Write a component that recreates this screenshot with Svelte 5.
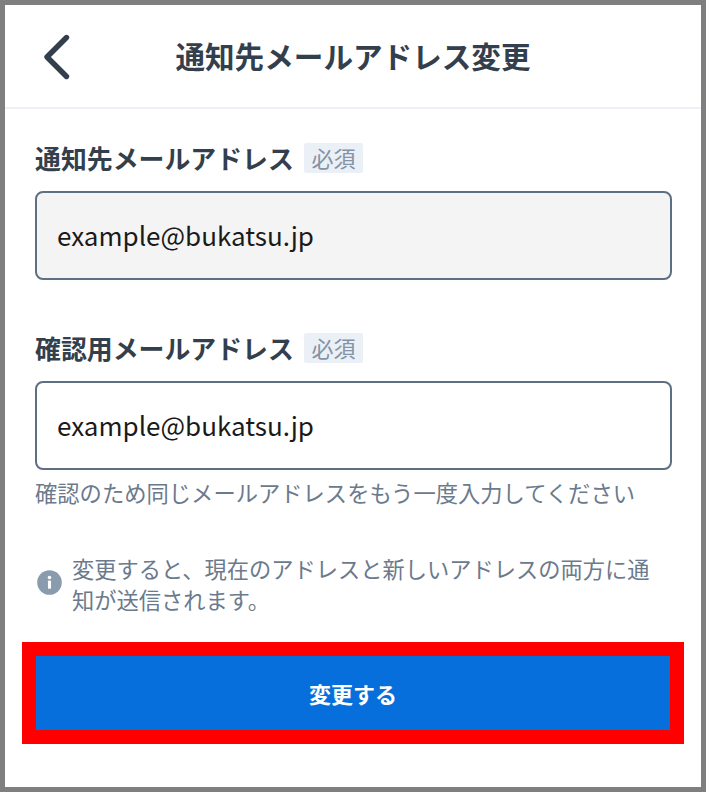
<script lang="ts">
  let email = $state('example@bukatsu.jp');
  let confirmEmail = $state('example@bukatsu.jp');
</script>

<div class="frame">
  <header class="header">
    <button class="back" aria-label="戻る">
      <svg width="30" height="48" viewBox="0 0 30 48" fill="none">
        <path d="M24.5 4.5 L5 24 L24.5 43.5" stroke="#333f4d" stroke-width="5.4" stroke-linecap="round" stroke-linejoin="round" />
      </svg>
    </button>
    <h1 class="title">通知先メールアドレス変更</h1>
  </header>

  <main class="body">
    <div class="field first">
      <div class="label-row">
        <label class="label" for="email">通知先メールアドレス</label>
        <span class="required">必須</span>
      </div>
      <input id="email" class="input readonly" type="text" readonly bind:value={email} />
    </div>

    <div class="field second">
      <div class="label-row">
        <label class="label" for="confirm">確認用メールアドレス</label>
        <span class="required">必須</span>
      </div>
      <input id="confirm" class="input" type="text" bind:value={confirmEmail} />
      <p class="hint">確認のため同じメールアドレスをもう一度入力してください</p>
    </div>

    <div class="notice">
      <svg class="info" width="25" height="25" viewBox="0 0 26 26">
        <circle cx="13" cy="13" r="12.8" fill="#8a9bad" />
        <circle cx="13" cy="7.8" r="1.9" fill="#fff" />
        <rect x="11.4" y="11" width="3.2" height="8.6" rx="0.8" fill="#fff" />
      </svg>
      <p>変更すると、現在のアドレスと新しいアドレスの両方に通知が送信されます。</p>
    </div>

    <div class="highlight">
      <button class="submit">変更する</button>
    </div>
  </main>
</div>

<style>
  :global(body) {
    margin: 0;
    background: #fff;
  }
  .frame {
    width: 706px;
    height: 792px;
    box-sizing: border-box;
    border: 5px solid #7f7f7f;
    background: #fff;
    font-family: 'Noto Sans CJK JP', 'Noto Sans', sans-serif;
    color: #333f4d;
    display: flex;
    flex-direction: column;
  }
  .header {
    height: 104px;
    flex: none;
    box-sizing: border-box;
    border-bottom: 2px solid #edf1f5;
    display: grid;
    grid-template-columns: 1fr auto 1fr;
    align-items: center;
  }
  .back {
    justify-self: start;
    margin: 2px 0 0 37px;
    padding: 0;
    border: 0;
    background: none;
    display: flex;
  }
  .title {
    grid-column: 2;
    margin: 0;
    font-size: 29.6px;
    font-weight: 700;
    line-height: 40px;
  }
  .body {
    padding: 0 30px;
    display: flex;
    flex-direction: column;
    flex: 1;
  }
  .first {
    margin-top: 34px;
  }
  .second {
    margin-top: 53px;
  }
  .label-row {
    display: flex;
    align-items: center;
    gap: 10px;
    height: 30px;
    margin-bottom: 18px;
  }
  .label {
    font-size: 25.9px;
    font-weight: 700;
    line-height: 28px;
  }
  .required {
    width: 59px;
    height: 30px;
    border-radius: 2px;
    background: #ebf0f7;
    color: #8493a5;
    font-size: 22px;
    line-height: 28px;
    text-align: center;
  }
  .input {
    display: block;
    width: 637px;
    height: 89px;
    box-sizing: border-box;
    padding: 0 20px 2px;
    border: 2px solid #5e6f83;
    border-radius: 8px;
    background: #fff;
    color: #1a1a1a;
    font-family: inherit;
    font-size: 26px;
    outline: none;
  }
  .input.readonly {
    background: #f4f4f5;
  }
  .hint {
    margin: 6px 0 0;
    color: #6b7a8c;
    font-size: 22.3px;
    line-height: 32px;
  }
  .notice {
    margin-top: 45px;
    display: flex;
    align-items: center;
    gap: 10px;
    color: #6b7a8c;
  }
  .info {
    flex: none;
    margin: 0 0 4px 2px;
  }
  .notice p {
    margin: 0;
    font-size: 22.25px;
    line-height: 31px;
  }
  .highlight {
    margin: 27px -13px 0;
    border: 14px solid #ff0000;
  }
  .submit {
    display: block;
    width: 100%;
    height: 74px;
    border: 0;
    padding: 0;
    background: #066fdc;
    color: #fff;
    font-family: inherit;
    font-size: 22px;
    font-weight: 700;
  }
</style>
